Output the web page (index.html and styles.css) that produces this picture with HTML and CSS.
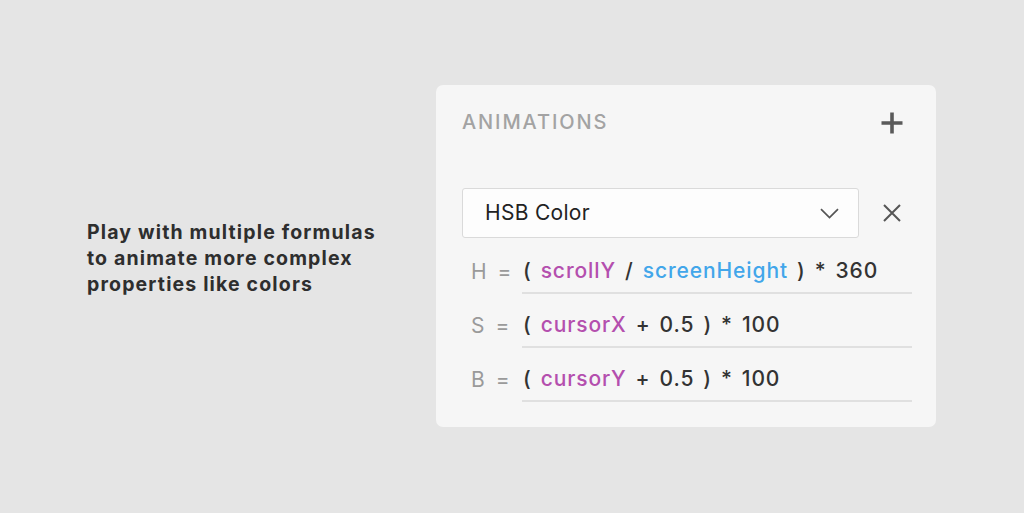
FILE: index.html
```html
<!DOCTYPE html>
<html lang="en">
<head>
<meta charset="utf-8">
<title>Animations</title>
<link rel="stylesheet" href="styles.css">
</head>
<body>
<main class="stage">
  <div class="caption-col">
    <p class="caption">Play with multiple formulas to animate more complex properties like colors</p>
  </div>
  <section class="panel">
    <header class="panel-head">
      <h2 class="panel-title">ANIMATIONS</h2>
      <svg class="plus" width="22" height="22" viewBox="0 0 22 22" aria-hidden="true">
        <path d="M11 0.5V21.5M0.5 11H21.5" stroke="#5a5a5a" stroke-width="3.6" fill="none"/>
      </svg>
    </header>
    <div class="select-row">
      <div class="select">
        <span class="select-value">HSB Color</span>
        <svg class="chevron" width="19" height="11" viewBox="0 0 19 11" aria-hidden="true">
          <path d="M1 1.2L9.5 9.5L18 1.2" stroke="#555" stroke-width="1.7" fill="none"/>
        </svg>
      </div>
      <svg class="close" width="18" height="18" viewBox="0 0 18 18" aria-hidden="true">
        <path d="M1 1L17 17M17 1L1 17" stroke="#555" stroke-width="2" fill="none"/>
      </svg>
    </div>
    <div class="formula">
      <div class="label"><span class="var">H</span><span class="eq">=</span></div>
      <div class="expr">
        <span>(</span><span class="purple">scrollY</span><span>/</span><span class="blue">screenHeight</span><span>)</span><span>*</span><span>360</span>
      </div>
    </div>
    <div class="formula">
      <div class="label"><span class="var">S</span><span class="eq">=</span></div>
      <div class="expr">
        <span>(</span><span class="purple">cursorX</span><span>+</span><span>0.5</span><span>)</span><span>*</span><span>100</span>
      </div>
    </div>
    <div class="formula">
      <div class="label"><span class="var">B</span><span class="eq">=</span></div>
      <div class="expr">
        <span>(</span><span class="purple">cursorY</span><span>+</span><span>0.5</span><span>)</span><span>*</span><span>100</span>
      </div>
    </div>
  </section>
</main>
</body>
</html>
```

FILE: styles.css
```css
* { box-sizing: border-box; }

html, body {
  margin: 0;
  padding: 0;
  background: #e5e5e5;
  font-family: Inter, "Noto Sans", "Liberation Sans", sans-serif;
}

.stage {
  width: 1024px;
  height: 513px;
  display: flex;
  align-items: flex-start;
  padding: 85px 0 0 87px;
}

.caption-col {
  flex: 0 0 349px;
  padding-top: 134px;
}

.caption {
  width: 300px;
  margin: 0;
  font-size: 19.5px;
  line-height: 26px;
  font-weight: 700;
  letter-spacing: 1.15px;
  color: #2e2e2e;
}

.panel {
  width: 500px;
  height: 342px;
  background: #f6f6f6;
  border-radius: 7px;
  padding: 25px 24px 0 26px;
}

.panel-head {
  display: flex;
  justify-content: space-between;
  align-items: center;
  height: 24px;
}

.panel-title {
  margin: 0;
  font-size: 20px;
  line-height: 24px;
  font-weight: 500;
  letter-spacing: 1.9px;
  color: #a3a3a3;
}

.plus {
  margin-right: 9px;
  margin-top: 2px;
}

.select-row {
  display: flex;
  align-items: center;
  margin: 54px 0 2px;
}

.select {
  width: 397px;
  height: 50px;
  background: #fdfdfd;
  border: 1px solid #dadada;
  border-radius: 3px;
  display: flex;
  align-items: center;
  justify-content: space-between;
  padding: 0 19px 0 22px;
}

.select-value {
  font-size: 21px;
  line-height: 24px;
  letter-spacing: 0.3px;
  color: #222;
}

.chevron { margin-top: 1px; }

.close { margin-left: 24px; }

.formula {
  display: flex;
  align-items: flex-end;
  height: 54px;
}

.label {
  flex: 0 0 60px;
  display: flex;
  padding: 0 0 10px 9px;
  font-size: 21px;
  line-height: 24px;
  color: #9a9a9a;
}

.eq { margin-left: 11px; }

.expr {
  flex: 1;
  display: flex;
  gap: 9px;
  padding: 0 0 9px 1px;
  border-bottom: 2px solid #e0e0e0;
  font-size: 21px;
  line-height: 24px;
  font-weight: 500;
  letter-spacing: 0.9px;
  color: #333;
}

.purple { color: #b44fae; }
.blue { color: #42a6ea; }
```
